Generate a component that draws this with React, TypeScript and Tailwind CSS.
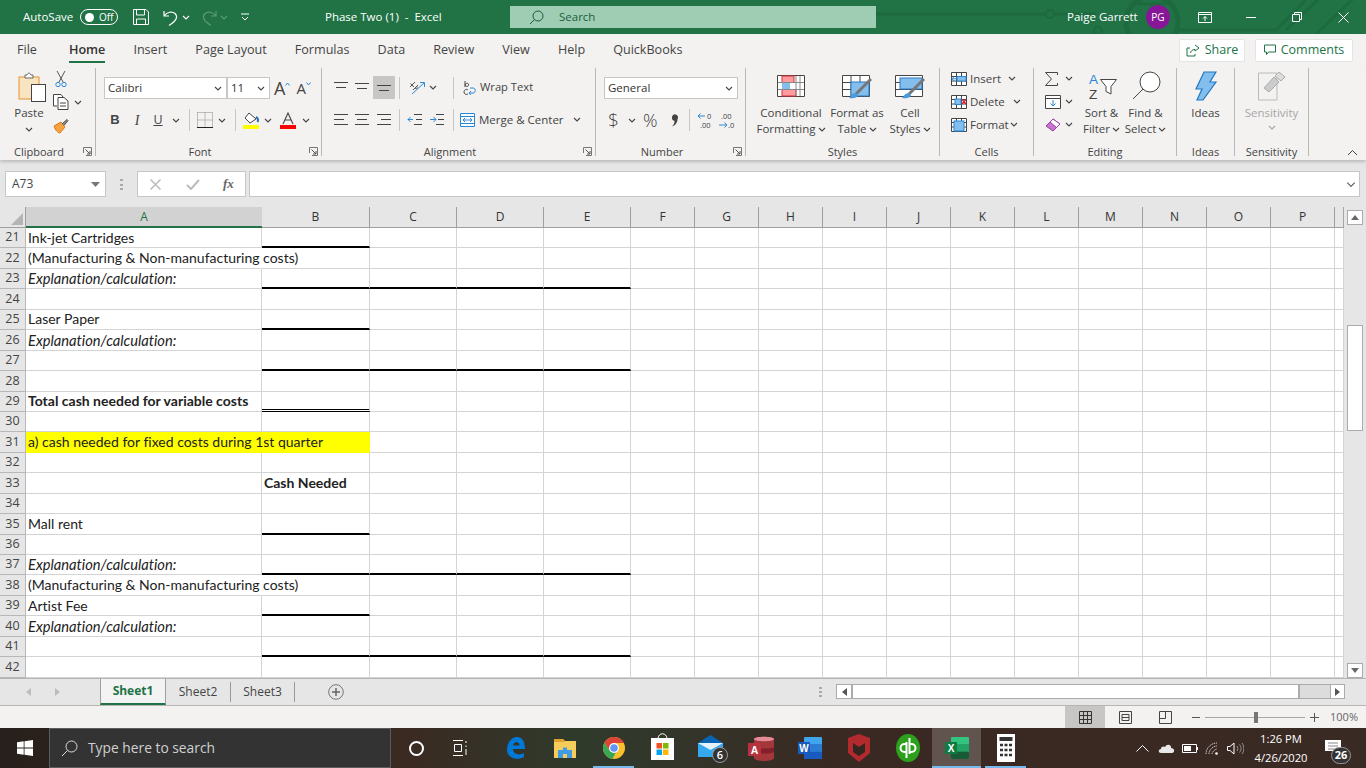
import type { ReactNode } from "react"

const Chev = ({ className = "", color = "#444" }: { className?: string; color?: string }) => (
  <svg width="8" height="5" viewBox="0 0 8 5" className={`shrink-0 ${className}`}>
    <path d="M1 1l3 3 3-3" fill="none" stroke={color} strokeWidth="1.1" />
  </svg>
)

function Launcher() {
  return (
    <svg width="9" height="9" viewBox="0 0 9 9" className="absolute bottom-0 right-[3px]">
      <path d="M.5 6V.5H8.500V8.500H3" fill="none" stroke="#777" />
      <path d="M2.500 2.500L7 7M7 4v3H4" fill="none" stroke="#555" />
    </svg>
  )
}

function Group({ label, className, launcher, children }: { label: string; className: string; launcher?: boolean; children: ReactNode }) {
  return (
    <div className={`relative flex h-[88px] shrink-0 flex-col border-r border-[#b8b8b8] ${className}`}>
      <div className="min-h-0 flex-1">{children}</div>
      <div className={`mb-[-4px] h-[17px] text-center text-[11px] leading-[17px] text-[#444] ${launcher ? "pr-[17px]" : ""}`}>{label}</div>
      {launcher && <Launcher />}
    </div>
  )
}

const Divider = ({ className = "" }: { className?: string }) => <div className={`h-[22px] w-px shrink-0 bg-[#c8c6c4] ${className}`} />

function Lines({ rows }: { rows: [number, number][] }) {
  return (
    <svg width="16" height="14" viewBox="0 0 16 14">
      {rows.map(([a, b], i) => (
        <path key={i} d={`M${a} ${1.5 + i * 5}H${b}`} stroke="#444" strokeWidth="1" />
      ))}
    </svg>
  )
}

function TitleBar() {
  return (
    <div className="relative flex h-[34px] shrink-0 items-center overflow-hidden bg-[#217346] text-[11.5px] text-white">
      <svg width="490" height="34" viewBox="0 0 490 34" className="absolute right-0 top-0">
        <g fill="none" stroke="#1c6a3e" strokeWidth="3">
          <path d="M0 14H170M178 14H220" />
          <circle cx="174" cy="14" r="4" strokeWidth="2" />
          <circle cx="276" cy="22" r="26" strokeWidth="5" />
          <path d="M262 4H290M300 30H400L430 0M410 30L450 -8M440 34L480 -4" />
          <circle cx="222" cy="31" r="4" strokeWidth="2" />
        </g>
      </svg>
      <span className="relative ml-[23px] w-[50px]">AutoSave</span>
      <div className="relative ml-[7px] flex h-[16px] w-[38px] items-center rounded-full border border-white pl-[4px] text-[10px]">
        <span className="h-[9px] w-[9px] rounded-full bg-white" />
        <span className="ml-[5px]">Off</span>
      </div>
      <svg width="16" height="16" viewBox="0 0 16 16" className="relative ml-[15px]">
        <path d="M.5.5H13L15.500 3V15.500H.5Z M3.500.5V6H11.500V.5 M3.500 15.500V10H12.500V15.500" fill="none" stroke="#fff" />
      </svg>
      <svg width="16" height="17" viewBox="0 0 16 17" className="relative ml-[14px]">
        <path d="M1 2V7H6 M1.500 6.500C4 3 9 2 12 4.500C15.500 8 13 12 6 16.500" fill="none" stroke="#fff" strokeWidth="1.200" />
      </svg>
      <Chev color="#fff" className="relative ml-[3px]" />
      <svg width="16" height="17" viewBox="0 0 16 17" className="relative ml-[11px]">
        <path d="M15 2V7H10 M14.500 6.500C12 3 7 2 4 4.500C.5 8 3 12 10 16.500" fill="none" stroke="#5d9a79" strokeWidth="1.200" />
      </svg>
      <Chev color="#5d9a79" className="relative ml-[3px]" />
      <svg width="8" height="8" viewBox="0 0 8 8" className="relative ml-[13px]">
        <path d="M0 1H8M1 4l3 3 3-3" fill="none" stroke="#fff" />
      </svg>
      <span className="relative ml-[76px] w-[116px] whitespace-pre">Phase Two (1)  -  Excel</span>
      <div className="relative ml-[69px] flex h-[22px] w-[366px] items-center bg-[#9fcdb3] text-[#1c5e3c]">
        <svg width="15" height="15" viewBox="0 0 15 15" className="ml-[19px]">
          <circle cx="9" cy="6" r="5" fill="none" stroke="#1c5e3c" />
          <path d="M5.500 9.500L1 14" stroke="#1c5e3c" />
        </svg>
        <span className="ml-[15px]">Search</span>
      </div>
      <span className="relative ml-[191px] w-[68px] whitespace-nowrap">Paige Garrett</span>
      <div className="relative ml-[11px] flex h-[24px] w-[24px] items-center justify-center rounded-full bg-[#881798] text-[10px]">PG</div>
      <svg width="14" height="11" viewBox="0 0 14 11" className="relative ml-[28px]">
        <path d="M.5.5H13.500V10.500H.5ZM.5 2.500H13.500M7 9V4.500M5 6.500L7 4.500 9 6.500" fill="none" stroke="#fff" />
      </svg>
      <div className="relative ml-[34px] h-px w-[10px] bg-white" />
      <svg width="10" height="10" viewBox="0 0 10 10" className="relative ml-[36px]">
        <path d="M.5 2.500H7.500V9.500H.5ZM2.500 2.500V.5H9.500V7.500H7.500" fill="none" stroke="#fff" />
      </svg>
      <svg width="11" height="11" viewBox="0 0 11 11" className="relative ml-[36px]">
        <path d="M.5.5L10.500 10.500M10.500.5L.5 10.500" stroke="#fff" />
      </svg>
    </div>
  )
}

function TabRow() {
  const tabs = ["Insert", "Page Layout", "Formulas", "Data", "Review", "View", "Help", "QuickBooks"]
  return (
    <div className="flex h-[34px] shrink-0 items-center bg-[#f3f2f1] pb-[2px] text-[12.6px] text-[#444]">
      <span className="ml-[17px]">File</span>
      <div className="ml-[32px] flex h-full flex-col items-center justify-center">
        <span className="relative top-[2px] border-b-[2px] border-[#217346] pb-[1px] font-semibold text-[#333]">Home</span>
      </div>
      <div className="ml-[28px] flex gap-[28px]">
        {tabs.map((t) => (
          <span key={t}>{t}</span>
        ))}
      </div>
      <div className="ml-auto mr-[13px] flex gap-[10px] text-[12.5px] font-medium text-[#217346]">
        <div className="flex h-[23px] w-[66px] items-center justify-center gap-[5px] rounded-[2px] border border-[#e4e4e4] bg-white">
          <svg width="14" height="13" viewBox="0 0 14 13">
            <path d="M9 1l4 3-4 3V5.500C6 5.500 5 7 4.500 9 M9 10V12H1V4H4" fill="none" stroke="#217346" />
          </svg>
          Share
        </div>
        <div className="flex h-[23px] w-[98px] items-center justify-center gap-[5px] rounded-[2px] border border-[#e4e4e4] bg-white">
          <svg width="12" height="12" viewBox="0 0 12 12">
            <path d="M.5 1H11.500V8H4.500L2.500 10.500V8H.5Z" fill="none" stroke="#217346" />
          </svg>
          Comments
        </div>
      </div>
    </div>
  )
}

function ClipboardGroup() {
  return (
    <Group label="Clipboard" className="w-[96px]" launcher>
      <div className="flex h-full">
        <div className="flex w-[58px] flex-col items-center pt-[4px]">
          <svg width="28" height="30" viewBox="0 0 28 30" className="ml-[5px]">
            <rect x="1" y="5" width="20" height="22" fill="#f8e4c0" stroke="#e8922c" />
            <path d="M7 6V3H9C10 .5 12 .5 13 3H15V6Z" fill="#fff" stroke="#666" />
            <rect x="13.500" y="12.500" width="14" height="17" fill="#fff" stroke="#444" />
          </svg>
          <span className="mt-[3px] text-[11.5px] leading-[15px] text-[#444]">Paste</span>
          <Chev className="mt-[7px]" />
        </div>
        <div className="flex flex-col pt-[3px]">
          <svg width="12" height="17" viewBox="0 0 12 17" className="ml-[-3px]">
            <path d="M2 0L8 11M10 0L4 11" stroke="#555" fill="none" />
            <circle cx="3" cy="13.500" r="2.200" fill="none" stroke="#2b88d8" />
            <circle cx="9" cy="13.500" r="2.200" fill="none" stroke="#2b88d8" />
          </svg>
          <div className="ml-[-5px] mt-[6px] flex items-center gap-[5px]">
            <svg width="16" height="16" viewBox="0 0 16 16">
              <path d="M4 12H.5V.5H8L10 3M5 3.500H11L15 7V15.500H5Z M7 9H13M7 12H13" fill="#fff" stroke="#444" />
            </svg>
            <Chev />
          </div>
          <svg width="16" height="16" viewBox="0 0 16 16" className="ml-[-5px] mt-[8px]">
            <path d="M1 8L8 4 12 9 7 15C5 15 2 12 1 8Z" fill="#f6a33c" stroke="#d9792a" />
            <path d="M9 6L14 1.500 15 2.500 11 7.500" fill="#888" stroke="#555" />
          </svg>
        </div>
      </div>
    </Group>
  )
}

function Select({ className, text }: { className: string; text: string }) {
  return (
    <div className={`flex h-[22px] items-center justify-between border border-[#c6c6c6] bg-white pl-[3px] pr-[4px] text-[11.5px] text-[#333] ${className}`}>
      {text}
      <Chev />
    </div>
  )
}

function FontGroup() {
  return (
    <Group label="Font" className="w-[226px]" launcher>
      <div className="flex flex-col pl-[8px] pt-[9px]">
        <div className="flex items-center">
          <Select className="w-[123px]" text="Calibri" />
          <Select className="w-[43px]" text="11" />
          <span className="ml-[4px] text-[18px] leading-none text-[#444]">A</span>
          <svg width="5" height="4" viewBox="0 0 5 4" className="mb-[9px]"><path d="M.5 3.500L2.500 1 4.500 3.500" fill="none" stroke="#2b88d8" /></svg>
          <span className="ml-[6px] text-[15px] leading-none text-[#444]">A</span>
          <svg width="5" height="4" viewBox="0 0 5 4" className="mb-[9px]"><path d="M.5.5L2.500 3 4.500.5" fill="none" stroke="#2b88d8" /></svg>
        </div>
        <div className="mt-[10px] flex h-[22px] items-center text-[#444]">
          <span className="w-[22px] text-center font-['Liberation_Sans',sans-serif] text-[13px] font-bold">B</span>
          <span className="w-[22px] text-center font-['Liberation_Serif',serif] text-[14px] italic">I</span>
          <span className="w-[20px] text-center text-[12.5px] leading-[14px] underline">U</span>
          <Chev className="ml-[4px]" />
          <Divider className="ml-[9px]" />
          <svg width="16" height="16" viewBox="0 0 16 16" className="ml-[7px]">
            <path d="M.5.5H15.500V15M.5.500V15M8 .5V15M.5 8H15.500" fill="none" stroke="#888" strokeDasharray="1 1" />
            <path d="M0 15.500H16" stroke="#222" />
          </svg>
          <Chev className="ml-[5px]" />
          <Divider className="ml-[9px]" />
          <svg width="16" height="17" viewBox="0 0 16 17" className="ml-[7px]">
            <path d="M6 1L13 7 7 11 2 6Z" fill="#fff" stroke="#444" />
            <path d="M13 5C15 6 15.500 8 14.500 10" stroke="#2b6cb0" strokeWidth="2" fill="none" />
            <rect x="0" y="13" width="16" height="4" fill="#ffff00" />
          </svg>
          <Chev className="ml-[5px]" />
          <svg width="16" height="17" viewBox="0 0 16 17" className="ml-[8px]">
            <path d="M3 12L8 1 13 12M5 8H11" fill="none" stroke="#444" strokeWidth="1.100" />
            <rect x="0" y="13" width="16" height="4" fill="#ff0000" />
          </svg>
          <Chev className="ml-[6px]" />
        </div>
      </div>
    </Group>
  )
}

function AlignmentGroup() {
  return (
    <Group label="Alignment" className="w-[274px]" launcher>
      <div className="flex flex-col pl-[8px] pt-[8px] text-[11.5px] text-[#444]">
        <div className="flex h-[23px] items-center">
          <div className="flex w-[21px] justify-center"><Lines rows={[[1, 15], [3, 13]]} /></div>
          <div className="flex w-[22px] justify-center"><div className="mt-[3px]"><Lines rows={[[1, 15], [3, 13]]} /></div></div>
          <div className="flex h-[23px] w-[22px] items-end justify-center bg-[#c8c6c4] pb-[1px]"><Lines rows={[[1, 15], [3, 13]]} /></div>
          <Divider className="ml-[4px]" />
          <svg width="16" height="15" viewBox="0 0 16 15" className="ml-[9px]">
            <path d="M1 7L6 2M1.500 3.500L5 7M4 10L9 5M6 8C7 9.500 9 8 8 6.500" fill="none" stroke="#555" />
            <path d="M3 14L15 3M11 2.500H15.500V7" stroke="#2b88d8" fill="none" />
          </svg>
          <Chev className="ml-[4px]" />
          <Divider className="ml-[16px]" />
          <svg width="14" height="16" viewBox="0 0 14 16" className="ml-[9px]">
            <path d="M2 1V7M2 5C3 2.500 6 3 5.500 5C5 7 3 7 2 5" fill="none" stroke="#444" />
            <path d="M5 10C3 8.500 1 10 1 12C1 14 3 15 5 14" fill="none" stroke="#444" />
            <path d="M6 13H10C13 13 13 8 10 8H7M8 11L6 13 8 15" fill="none" stroke="#2b88d8" />
          </svg>
          <span className="ml-[3px] text-[11.2px]">Wrap Text</span>
        </div>
        <div className="mt-[9px] flex h-[23px] items-center">
          <div className="flex w-[21px] justify-center"><Lines rows={[[1, 15], [1, 11], [1, 15]]} /></div>
          <div className="flex w-[22px] justify-center"><Lines rows={[[1, 15], [3, 13], [1, 15]]} /></div>
          <div className="flex w-[22px] justify-center"><Lines rows={[[1, 15], [5, 15], [1, 15]]} /></div>
          <Divider className="ml-[4px]" />
          <svg width="16" height="14" viewBox="0 0 16 14" className="ml-[7px]">
            <path d="M7 1.500H15M9 6.500H15M7 11.500H15" stroke="#444" />
            <path d="M6 6.500H1M3.500 4L1 6.500 3.500 9" stroke="#2b88d8" fill="none" />
          </svg>
          <svg width="16" height="14" viewBox="0 0 16 14" className="ml-[6px]">
            <path d="M7 1.500H15M9 6.500H15M7 11.500H15" stroke="#444" />
            <path d="M1 6.500H7M4.500 4L7 6.500 4.500 9" stroke="#2b88d8" fill="none" />
          </svg>
          <Divider className="ml-[8px]" />
          <svg width="15" height="14" viewBox="0 0 15 14" className="ml-[6px]">
            <path d="M.5.5H14.500V13.500H.5ZM.5 3.500H14.500M.5 10.500H14.500" fill="#fff" stroke="#2b88d8" />
            <path d="M3 7H12M5 5L3 7 5 9M10 5L12 7 10 9" fill="none" stroke="#2b88d8" />
          </svg>
          <span className="ml-[4px]">Merge &amp; Center</span>
          <Chev className="ml-[9px]" />
        </div>
      </div>
    </Group>
  )
}

function NumberGroup() {
  return (
    <Group label="Number" className="w-[150px]" launcher>
      <div className="flex flex-col pl-[8px] pt-[9px] text-[#444]">
        <Select className="w-[134px]" text="General" />
        <div className="mt-[10px] flex h-[22px] items-center">
          <span className="ml-[4px] w-[12px] text-[19px] font-light leading-none">$</span>
          <Chev className="ml-[8px]" />
          <span className="ml-[7px] w-[18px] text-[18px] font-light leading-none">%</span>
          <svg width="8" height="13" viewBox="0 0 8 13" className="ml-[10px]">
            <path d="M1 3.500A3 3 0 1 1 6.500 5C6.500 9 4 11.500 1 12.500C3 10.500 3.500 9 3.500 7A3 3 0 0 1 1 3.500Z" fill="#444" />
          </svg>
          <Divider className="ml-[10px]" />
          <svg width="18" height="18" viewBox="0 0 18 18" className="ml-[7px]">
            <text x="10" y="8" fontSize="7.500" fill="#444">0</text>
            <text x="3" y="17" fontSize="7.500" fill="#444">.00</text>
            <path d="M8 5H1M3.500 2.500L1 5 3.500 7.500" fill="none" stroke="#2b88d8" />
          </svg>
          <svg width="18" height="18" viewBox="0 0 18 18" className="ml-[3px]">
            <text x="3" y="8" fontSize="7.500" fill="#444">.00</text>
            <text x="10" y="17" fontSize="7.500" fill="#444">.0</text>
            <path d="M1 14H9M6.500 11.500L9 14 6.500 16.500" fill="none" stroke="#2b88d8" />
          </svg>
        </div>
      </div>
    </Group>
  )
}

function LargeLabel({ a, b, muted, className = "mt-[4px]" }: { a: string; b: string; muted?: boolean; className?: string }) {
  return (
    <div className={`flex flex-col items-center text-[11.5px] leading-[16px] ${muted ? "text-[#a6a6a6]" : "text-[#444]"} ${className}`}>
      <span className="whitespace-nowrap">{a}</span>
      <span className="flex items-center gap-[2px] whitespace-nowrap">{b}<Chev color={muted ? "#a6a6a6" : "#444"} /></span>
    </div>
  )
}

function StylesGroup() {
  return (
    <Group label="Styles" className="w-[194px]">
      <div className="flex pl-[2px] pt-[7px]">
        <div className="flex w-[86px] flex-col items-center">
          <svg width="28" height="22" viewBox="0 0 28 22">
            <path d="M.5.5H27.500V21.500H.5Z" fill="#fff" stroke="#444" />
            <rect x="5" y="1" width="12" height="6.500" fill="#ff9a9f" stroke="#d13438" />
            <rect x="5" y="8" width="8" height="6" fill="#83beec" />
            <rect x="5" y="14.500" width="14" height="6.500" fill="#ff9a9f" stroke="#d13438" />
            <path d="M19 1V21M23 1V21M1 7.500H27M1 14.500H27" stroke="#888" />
          </svg>
          <LargeLabel a="Conditional" b="Formatting" className="mt-[8px]" />
        </div>
        <div className="flex w-[46px] flex-col items-center">
          <svg width="30" height="24" viewBox="0 0 30 24" className="mb-[-2px]">
            <path d="M.5.5H27.500V21.500H.5ZM.5 7.500H27.500M.5 14.500H27.500M9 .5V21.500M18 .5V21.500" fill="#fff" stroke="#444" />
            <rect x="9" y="7" width="18" height="14" fill="#83beec" stroke="#2b78c4" />
            <path d="M29 4L14 19" stroke="#777" strokeWidth="3" />
            <path d="M14 18C10 18 9 21 7 23C12 24 16 22 16 20Z" fill="#4a9ae0" />
          </svg>
          <LargeLabel a="Format as" b="Table" className="mt-[8px]" />
        </div>
        <div className="ml-[7px] flex w-[46px] flex-col items-center">
          <svg width="30" height="24" viewBox="0 0 30 24" className="mb-[-2px]">
            <path d="M.5.5H27.500V21.500H.5ZM.5 7.500H27.500M.5 14.500H27.500" fill="#fff" stroke="#444" />
            <rect x="5" y="3" width="22" height="11" fill="#83beec" stroke="#2b78c4" />
            <path d="M29 4L14 19" stroke="#777" strokeWidth="3" />
            <path d="M14 18C10 18 9 21 7 23C12 24 16 22 16 20Z" fill="#4a9ae0" />
          </svg>
          <LargeLabel a="Cell" b="Styles" className="mt-[8px]" />
        </div>
      </div>
    </Group>
  )
}

function CellIcon({ kind }: { kind: "insert" | "delete" | "format" }) {
  return (
    <svg width="16" height="14" viewBox="0 0 16 14" className="shrink-0">
      <path d="M.5.5H15.500V13.500H.5ZM.5 4.500H15.500M.5 9H15.500M5.500.5V13.500M10.500.5V13.500" fill="#fff" stroke="#444" />
      {kind === "insert" && <path d="M6 4.500H15V9H6Z" fill="#83beec" stroke="#2b88d8" />}
      {kind === "insert" && <path d="M6 6.800H1M3 4.800L1 6.800 3 8.800" fill="none" stroke="#2b88d8" />}
      {kind === "delete" && <rect x="4" y="4" width="6" height="5.500" fill="#83beec" stroke="#2b88d8" />}
      {kind === "delete" && <path d="M11 4.500L15 9M15 4.500L11 9" stroke="#e81123" strokeWidth="1.200" />}
      {kind === "format" && <rect x="3" y="3" width="10" height="10" fill="#83beec" stroke="#2b88d8" />}
    </svg>
  )
}

function CellsGroup() {
  return (
    <Group label="Cells" className="w-[94px]">
      <div className="mt-[-1px] flex flex-col pl-[11px] text-[11.5px] text-[#444]">
        <div className="flex h-[23px] items-center"><CellIcon kind="insert" /><span className="ml-[3px]">Insert</span><Chev className="ml-[7px]" /></div>
        <div className="flex h-[23px] items-center"><CellIcon kind="delete" /><span className="ml-[3px]">Delete</span><Chev className="ml-[8px]" /></div>
        <div className="flex h-[23px] items-center"><CellIcon kind="format" /><span className="ml-[3px]">Format</span><Chev className="ml-[1px]" /></div>
      </div>
    </Group>
  )
}

function EditingGroup() {
  return (
    <Group label="Editing" className="w-[143px]">
      <div className="flex">
        <div className="mt-[-1px] flex w-[44px] flex-col pl-[11px]">
          <div className="flex h-[23px] items-center gap-[6px]">
            <svg width="13" height="14" viewBox="0 0 13 14"><path d="M12.500 3V.5H.5L6.500 7 .5 13.500H12.500V11" fill="none" stroke="#444" /></svg>
            <Chev className="ml-[1px]" />
          </div>
          <div className="flex h-[23px] items-center gap-[4px]">
            <svg width="16" height="14" viewBox="0 0 16 14"><path d="M.5.5H15.500V13.500H.5ZM.5 3.500H15.500" fill="#fff" stroke="#444" /><path d="M8 5V11M5.500 8.500L8 11 10.500 8.500" fill="none" stroke="#2b88d8" /></svg>
            <Chev />
          </div>
          <div className="flex h-[23px] items-center gap-[4px]">
            <svg width="16" height="14" viewBox="0 0 16 14"><path d="M1 8L8 1 15 6 8 13Z" fill="#c774d1" stroke="#9a3fa8" /><path d="M8 1L15 6 11.500 9.500 5 4Z" fill="#fff" stroke="#9a3fa8" /></svg>
            <Chev />
          </div>
        </div>
        <div className="flex w-[47px] flex-col items-center pt-[3px]">
          <svg width="30" height="31" viewBox="0 0 30 31" className="mb-[-1px]">
            <text x="2" y="12.500" fontSize="13.500" fontFamily="Liberation Sans" fill="#2b88d8">A</text>
            <text x="2" y="28" fontSize="13.500" fontFamily="Liberation Sans" fill="#444">Z</text>
            <path d="M13.500 8.500H29.500L24 15.500V23L19 20.500V15.500Z" fill="#fff" stroke="#444" />
          </svg>
          <LargeLabel a="Sort &" b="Filter" className="mt-[4px]" />
        </div>
        <div className="ml-[-3px] flex w-[47px] flex-col items-center pt-[3px]">
          <svg width="30" height="30" viewBox="0 0 30 30">
            <circle cx="19" cy="11" r="10" fill="#fff" stroke="#444" />
            <path d="M12 18L2 28" stroke="#444" />
          </svg>
          <LargeLabel a="Find &" b="Select" className="mt-[4px]" />
        </div>
      </div>
    </Group>
  )
}

function IdeasGroup() {
  return (
    <Group label="Ideas" className="w-[58px]">
      <div className="flex flex-col items-center pt-[3px]">
        <svg width="22" height="30" viewBox="0 0 22 30">
          <path d="M9 1H21L15 11H21L8 29H2L7 18H1Z" fill="#83beec" stroke="#1f78c4" strokeWidth="1.200" />
        </svg>
        <span className="mt-[4px] text-[11.5px] leading-[16px] text-[#444]">Ideas</span>
      </div>
    </Group>
  )
}

function SensitivityGroup() {
  return (
    <Group label="Sensitivity" className="w-[74px]">
      <div className="flex flex-col items-center pt-[3px]">
        <svg width="28" height="30" viewBox="0 0 28 30">
          <path d="M.5 2H19V29H.5Z" fill="#f3f2f1" stroke="#bbb" />
          <path d="M6 17L16 6 21 11 11 21Z" fill="#ccc" stroke="#aaa" />
          <path d="M17 5L21 1 27 6 23 10Z" fill="#ddd" stroke="#aaa" />
        </svg>
        <span className="mt-[4px] text-[11.5px] leading-[16px] text-[#a6a6a6]">Sensitivity</span>
        <Chev color="#a6a6a6" className="mt-[4px]" />
      </div>
    </Group>
  )
}

function Ribbon() {
  return (
    <div className="relative flex h-[92px] shrink-0 bg-[#f3f2f1] shadow-[0_2px_3px_rgba(0,0,0,0.18)]">
      <ClipboardGroup />
      <FontGroup />
      <AlignmentGroup />
      <NumberGroup />
      <StylesGroup />
      <CellsGroup />
      <EditingGroup />
      <IdeasGroup />
      <SensitivityGroup />
      <svg width="11" height="7" viewBox="0 0 11 7" className="absolute bottom-[4px] right-[8px]">
        <path d="M1 6l4.500-4.500L10 6" fill="none" stroke="#444" />
      </svg>
    </div>
  )
}

function FormulaBar() {
  return (
    <div className="flex h-[47px] shrink-0 items-start bg-[#e6e6e6] pt-[11px]">
      <div className="ml-[5px] flex h-[26px] w-[101px] items-center justify-between border border-[#c6c6c6] bg-white pl-[6px] pr-[5px] text-[12px] text-[#444]">
        A73
        <svg width="9" height="5" viewBox="0 0 9 5"><path d="M0 0H9L4.500 5Z" fill="#777" /></svg>
      </div>
      <div className="ml-[14px] mt-[8px] flex h-[11px] w-[3px] flex-col justify-between">
        <span className="h-[2px] bg-[#aaa]" /><span className="h-[2px] bg-[#aaa]" /><span className="h-[2px] bg-[#aaa]" />
      </div>
      <div className="ml-[14px] flex h-[26px] w-[109px] items-center border border-[#c6c6c6] bg-white">
        <svg width="11" height="11" viewBox="0 0 11 11" className="ml-[12px]"><path d="M.5.5L10.500 10.500M10.500.5L.5 10.500" stroke="#bbb" strokeWidth="1.500" /></svg>
        <svg width="14" height="11" viewBox="0 0 14 11" className="ml-[25px]"><path d="M1 6L5 10 13 1" fill="none" stroke="#bbb" strokeWidth="2" /></svg>
        <span className="ml-[23px] font-['Liberation_Serif',serif] text-[13px] font-bold italic text-[#666]">fx</span>
      </div>
      <div className="ml-[3px] flex h-[26px] w-[1111px] items-center justify-end border border-[#c6c6c6] bg-white pr-[4px]">
        <Chev color="#666" className="scale-125" />
      </div>
    </div>
  )
}

type Row = {
  n: number
  a?: string
  b?: string
  kind?: "italic" | "bold" | "wide" | "yellow"
  line?: "b" | "span" | "double"
}

const rows: Row[] = [
  { n: 21, a: "Ink-jet Cartridges", line: "b" },
  { n: 22, a: "(Manufacturing & Non-manufacturing costs)", kind: "wide" },
  { n: 23, a: "Explanation/calculation:", kind: "italic", line: "span" },
  { n: 24 },
  { n: 25, a: "Laser Paper", line: "b" },
  { n: 26, a: "Explanation/calculation:", kind: "italic" },
  { n: 27, line: "span" },
  { n: 28 },
  { n: 29, a: "Total cash needed for variable costs", kind: "bold", line: "double" },
  { n: 30 },
  { n: 31, a: "a) cash needed for fixed costs during 1st quarter", kind: "yellow" },
  { n: 32 },
  { n: 33, b: "Cash Needed" },
  { n: 34 },
  { n: 35, a: "Mall rent", line: "b" },
  { n: 36 },
  { n: 37, a: "Explanation/calculation:", kind: "italic", line: "span" },
  { n: 38, a: "(Manufacturing & Non-manufacturing costs)", kind: "wide" },
  { n: 39, a: "Artist Fee", line: "b" },
  { n: 40, a: "Explanation/calculation:", kind: "italic" },
  { n: 41, line: "span" },
  { n: 42 },
]

const columns = ["A", "B", "C", "D", "E", "F", "G", "H", "I", "J", "K", "L", "M", "N", "O", "P", ""]

function cellClass(row: Row, col: number) {
  const thick =
    (row.line === "b" && col === 1) || (row.line === "span" && col >= 1 && col <= 4)
  const double = row.line === "double" && col === 1
  const yellow = row.kind === "yellow" && col <= 1
  const noRight = (row.kind === "wide" || row.kind === "yellow") && col === 0
  let cls = "relative flex min-w-0 items-center whitespace-nowrap border-b border-r border-[#d4d4d4] pl-[2px] "
  if (thick) cls += "border-b-2 border-b-black "
  if (double) cls += "border-b-[3px] border-b-black [border-bottom-style:double] "
  if (yellow) cls += "border-b-[#ffff00] border-r-[#ffff00] "
  if (noRight) cls += "border-r-transparent "
  cls += yellow ? "bg-[#ffff00]" : "bg-white"
  return cls
}

function Sheet() {
  return (
    <div className="flex h-[471px] shrink-0 bg-[#e6e6e6]">
      <div className="grid h-full w-[1344px] shrink-0 grid-cols-[26px_236px_108px_87px_87px_87px_repeat(11,64px)_9px] grid-rows-[21px_repeat(22,20.45px)] border-r border-[#a6a6a6] font-['Lato',sans-serif] text-[14px] leading-none text-[#222] [font-variant-ligatures:none]">
        <div className="flex items-end justify-end border-b border-r border-[#9f9f9f] p-[2px]">
          <svg width="12" height="12" viewBox="0 0 12 12"><path d="M12 0V12H0Z" fill="#b4b4b4" /></svg>
        </div>
        {columns.map((c, i) => (
          <div
            key={c || "q"}
            className={`flex items-center justify-center text-[12px] font-['Open_Sans',sans-serif] ${
              i === 0
                ? "border-b-2 border-b-[#217346] bg-[#d2d2d2] text-[#217346]"
                : i === 16
                  ? "border-b border-[#9f9f9f]"
                  : "border-b border-r border-[#9f9f9f] text-[#333]"
            }`}
          >
            {c}
          </div>
        ))}
        {rows.map((row) => (
          <div key={row.n} className="contents">
            <div className="flex items-center justify-center border-b border-r border-[#b8b8b8] font-['Open_Sans',sans-serif] text-[12.5px] text-[#444]">
              {row.n}
            </div>
            {columns.map((_, col) => (
              <div key={col} className={cellClass(row, col)}>
                {col === 0 && row.a && (
                  <span className={`relative z-10 ${row.kind === "italic" ? "text-[14.7px] italic" : ""} ${row.kind === "bold" ? "font-bold" : ""}`}>{row.a}</span>
                )}
                {col === 1 && row.b && <span className="font-bold">{row.b}</span>}
              </div>
            ))}
          </div>
        ))}
      </div>
      <div className="ml-[3px] flex w-[16px] flex-col pt-[3px]">
        <div className="flex h-[15px] items-center justify-center border border-[#ababab] bg-white">
          <svg width="8" height="5" viewBox="0 0 8 5"><path d="M4 0L8 5H0Z" fill="#666" /></svg>
        </div>
        <div className="mt-[100px] h-[106px] border border-[#ababab] bg-white" />
        <div className="mt-auto flex h-[15px] items-center justify-center border border-[#ababab] bg-white">
          <svg width="8" height="5" viewBox="0 0 8 5"><path d="M0 0H8L4 5Z" fill="#666" /></svg>
        </div>
      </div>
    </div>
  )
}

function SheetTabs() {
  return (
    <div className="flex h-[28px] shrink-0 items-stretch border-y border-[#b5b5b5] bg-[#e6e6e6] text-[12px] text-[#444]">
      <div className="flex w-[100px] items-center pl-[26px]">
        <svg width="6" height="8" viewBox="0 0 6 8"><path d="M5 0V8L0 4Z" fill="#bcbcbc" /></svg>
        <svg width="6" height="8" viewBox="0 0 6 8" className="ml-[23px]"><path d="M0 0V8L5 4Z" fill="#bcbcbc" /></svg>
      </div>
      <div className="mt-[-1px] flex w-[66px] items-center justify-center border-x border-b-2 border-t border-x-[#a0a0a0] border-b-[#217346] border-t-[#b5b5b5] bg-[#f3f3f3] font-bold text-[#217346]">Sheet1</div>
      <div className="flex w-[64px] items-center justify-center">
        <span>Sheet2</span>
      </div>
      <div className="my-[3px] w-px bg-[#999]" />
      <div className="flex w-[63px] items-center justify-center">Sheet3</div>
      <div className="my-[3px] w-px bg-[#999]" />
      <div className="ml-[33px] flex items-center">
        <svg width="16" height="16" viewBox="0 0 16 16">
          <circle cx="8" cy="8" r="7.300" fill="none" stroke="#777" />
          <path d="M4 8H12M8 4V12" stroke="#666" strokeWidth="1.500" />
        </svg>
      </div>
      <div className="ml-[475px] flex w-[3px] flex-col justify-center gap-[2px]">
        <span className="h-[2px] bg-[#aaa]" /><span className="h-[2px] bg-[#aaa]" /><span className="h-[2px] bg-[#aaa]" />
      </div>
      <div className="ml-[14px] mt-[5px] flex h-[15px] w-[509px] border border-[#ababab]">
        <div className="flex w-[14px] items-center justify-center bg-white">
          <svg width="5" height="8" viewBox="0 0 5 8"><path d="M5 0V8L0 4Z" fill="#555" /></svg>
        </div>
        <div className="w-[449px] border-x-[2px] border-[#ababab] bg-white" />
        <div className="flex-1 bg-[#dcdcdc]" />
        <div className="flex w-[14px] items-center justify-center border-l border-[#ababab] bg-white">
          <svg width="5" height="8" viewBox="0 0 5 8"><path d="M0 0V8L5 4Z" fill="#555" /></svg>
        </div>
      </div>
    </div>
  )
}

function StatusBar() {
  return (
    <div className="flex h-[22px] shrink-0 items-stretch justify-end bg-[#f3f2f1] text-[11px] text-[#666]">
      <div className="flex w-[40px] items-center justify-center bg-[#c8c6c4]">
        <svg width="13" height="13" viewBox="0 0 13 13"><path d="M.5.5H12.500V12.500H.5ZM4.500.5V12.500M8.500.5V12.500M.5 4.500H12.500M.5 8.500H12.500" fill="none" stroke="#333" /></svg>
      </div>
      <div className="flex w-[40px] items-center justify-center">
        <svg width="13" height="13" viewBox="0 0 13 13"><path d="M.5.5H12.500V12.500H.5ZM3 3.500H10M3 6.500H10M3 9.500H10M3 3.500V9.500M10 3.500V9.500" fill="none" stroke="#444" /></svg>
      </div>
      <div className="flex w-[40px] items-center justify-center">
        <svg width="13" height="13" viewBox="0 0 13 13"><path d="M.5.5H12.500V12.500H.5ZM.5 7.500H6.500V.5M6.500 7.500" fill="none" stroke="#444" /></svg>
      </div>
      <div className="ml-[7px] flex items-center">
        <div className="h-px w-[8px] bg-[#555]" />
        <div className="relative ml-[5px] flex h-[12px] w-[100px] items-center">
          <div className="h-px w-full bg-[#a6a6a6]" />
          <div className="absolute left-[49px] h-[11px] w-[4px] bg-[#767676]" />
        </div>
        <svg width="9" height="9" viewBox="0 0 9 9" className="ml-[5px]"><path d="M0 4.500H9M4.500 0V9" stroke="#555" /></svg>
      </div>
      <span className="ml-[11px] mr-[8px] self-center text-[#666]">100%</span>
    </div>
  )
}

function TaskIcon({ active, underline, children }: { active?: boolean; underline?: boolean; children: ReactNode }) {
  return (
    <div className={`relative flex h-full w-[49px] shrink-0 items-center justify-center ${active ? "bg-white/20" : ""}`}>
      {children}
      {underline && <div className={`absolute bottom-0 h-[2px] bg-[#76b9ed] ${active ? "inset-x-0" : "inset-x-[4px]"}`} />}
    </div>
  )
}

function OfficeIcon({ letter, box, bands }: { letter: string; box: string; bands: string[] }) {
  return (
    <svg width="24" height="24" viewBox="0 0 24 24">
      <rect x="6" y="1" width="18" height="22" rx="1" fill={bands[0]} />
      <rect x="6" y="8" width="18" height="7.500" fill={bands[1]} />
      <rect x="6" y="15.500" width="18" height="7.500" rx="1" fill={bands[2]} />
      <rect x="0" y="6" width="12" height="12" fill={box} />
      <text x="6" y="15.500" textAnchor="middle" fontSize="10" fontWeight="700" fontFamily="Liberation Sans" fill="#fff">{letter}</text>
    </svg>
  )
}

function Taskbar() {
  return (
    <div className="flex h-[40px] shrink-0 items-stretch bg-[linear-gradient(90deg,#28201c_0%,#3a2a22_30%,#2f3a2b_42%,#33352a_50%,#3a2822_62%,#3a2a24_100%)] text-white">
      <div className="flex w-[49px] items-center justify-center">
        <svg width="16" height="16" viewBox="0 0 16 16"><path d="M0 2.300L6.700 1.300V7.500H0ZM7.500 1.200L16 0V7.500H7.500ZM0 8.400H6.700V14.700L0 13.700ZM7.500 8.400H16V16L7.500 14.800Z" fill="#fff" /></svg>
      </div>
      <div className="flex w-[342px] items-center border border-[#5c5c5c] bg-[#333333] pl-[11px] text-[13.8px] text-[#d0d0d0]">
        <svg width="17" height="17" viewBox="0 0 17 17"><circle cx="10.500" cy="6.500" r="5.500" fill="none" stroke="#ddd" /><path d="M6.500 10.500L1 16" stroke="#ddd" /></svg>
        <span className="ml-[10px] pt-[1px]">Type here to search</span>
      </div>
      <div className="flex w-[50px] items-center justify-center">
        <span className="h-[15px] w-[15px] rounded-full border-[2px] border-white" />
      </div>
      <div className="flex w-[50px] items-center justify-start pl-[11px]">
        <svg width="17" height="16" viewBox="0 0 17 16"><path d="M1 .5H11M1 15.500H11M2.500 4.500H9.500V11.500H2.500ZM14 1V3M14 5.500V7M14 9V15" fill="none" stroke="#fff" /></svg>
      </div>
      <TaskIcon>
        <svg width="20" height="24" viewBox="0 0 20 24">
          <path d="M1 14C1 6 6 1 11 1C16 1 19 5 19 13H7C7 18 13 20 18 17V21C11 25 1 22 1 14ZM7 9.500H13.500C13.500 5.500 8 5 7 9.500Z" fill="#0078d7" />
        </svg>
      </TaskIcon>
      <TaskIcon>
        <svg width="22" height="21" viewBox="0 0 22 21">
          <path d="M0 1H9L11 3H22V20H0Z" fill="#f6cd5a" />
          <path d="M0 1H9L11 4H0Z" fill="#e2a32b" />
          <path d="M4 20V12H9V9.500H13V12H18V20H13V16H9V20Z" fill="#3f9be5" />
        </svg>
      </TaskIcon>
      <TaskIcon underline>
        <svg width="22" height="22" viewBox="0 0 22 22">
          <circle cx="11" cy="11" r="11" fill="#fbc02d" />
          <path d="M11 0A11 11 0 0 0 1.500 5.500L6 13 11 6H21A11 11 0 0 0 11 0Z" fill="#db4437" />
          <path d="M1.500 5.500A11 11 0 0 0 9.500 21.900L13 15 6 13Z" fill="#3aa757" />
          <circle cx="11" cy="11" r="5" fill="#fff" />
          <circle cx="11" cy="11" r="3.800" fill="#5e97f6" />
        </svg>
      </TaskIcon>
      <TaskIcon>
        <svg width="23" height="27" viewBox="0 0 23 27" className="mt-[-4px]">
          <path d="M7 6C7 -1 16 -1 16 6" fill="none" stroke="#fff" />
          <rect x="0" y="5" width="23" height="22" fill="#fff" />
          <rect x="5.500" y="10" width="5.500" height="5.500" fill="#f25022" />
          <rect x="12" y="10" width="5.500" height="5.500" fill="#7fba00" />
          <rect x="5.500" y="16.500" width="5.500" height="5.500" fill="#00a4ef" />
          <rect x="12" y="16.500" width="5.500" height="5.500" fill="#ffb900" />
        </svg>
      </TaskIcon>
      <TaskIcon>
        <div className="relative ml-[3px] h-[26px] w-[30px]">
          <svg width="25" height="22" viewBox="0 0 25 22">
            <path d="M0 8L12.500 0 25 8V22H0Z" fill="#0a64b4" />
            <path d="M0 8H25V22H0Z" fill="#35a8f0" />
            <path d="M0 8L12.500 15 25 8" fill="#e6f2fb" />
          </svg>
          <div className="absolute bottom-[-2px] right-0 flex h-[16px] w-[16px] items-center justify-center rounded-full border border-[#999] bg-[#333] text-[11px] font-semibold">6</div>
        </div>
      </TaskIcon>
      <TaskIcon>
        <svg width="26" height="27" viewBox="0 0 26 27">
          <path d="M6 4C6 1 26 1 26 4V23C26 27 6 27 6 23Z" fill="#a4373a" />
          <path d="M6 4C6 1 26 1 26 4C26 7 6 7 6 4Z" fill="#e38b97" />
          <path d="M6 12C10 14 22 14 26 12V17C22 19 10 19 6 17Z" fill="#841f2a" />
          <rect x="0" y="8" width="13" height="13" fill="#b7313e" />
          <text x="6.500" y="18.500" textAnchor="middle" fontSize="10.500" fontWeight="700" fontFamily="Liberation Sans" fill="#fff">A</text>
        </svg>
      </TaskIcon>
      <TaskIcon>
        <OfficeIcon letter="W" box="#185abd" bands={["#41a5ee", "#2b7cd3", "#185abd"]} />
      </TaskIcon>
      <TaskIcon>
        <svg width="22" height="28" viewBox="0 0 22 28">
          <path d="M0 4L11 0 22 4V19L11 28 0 19Z" fill="#b2292e" />
          <path d="M5 9L11 13 17 9V18L11 22 5 18Z" fill="#33261f" />
        </svg>
      </TaskIcon>
      <TaskIcon>
        <svg width="24" height="28" viewBox="0 0 24 28">
          <ellipse cx="12" cy="14" rx="12" ry="14" fill="#2ca01c" />
          <path d="M10.500 8V24M13.500 4V20M10.500 10H8.500A4 4 0 0 0 8.500 18H10.500M13.500 10H15.500A4 4 0 0 1 15.500 18H13.500" fill="none" stroke="#fff" strokeWidth="2" />
        </svg>
      </TaskIcon>
      <TaskIcon active underline>
        <OfficeIcon letter="X" box="#107c41" bands={["#33c481", "#21a366", "#185c37"]} />
      </TaskIcon>
      <TaskIcon underline>
        <svg width="18" height="28" viewBox="0 0 18 28">
          <rect width="18" height="28" fill="#fff" />
          <rect x="2.500" y="3" width="13" height="4" fill="#333" />
          <path d="M3 11H6M7.500 11H10.500M12 11H15M3 16H6M7.500 16H10.500M12 16H15M3 21H6M7.500 21H10.500M12 21H15" stroke="#333" strokeWidth="2.500" />
        </svg>
      </TaskIcon>
      <div className="ml-auto flex items-center pr-[15px] text-[12px]">
        <svg width="13" height="8" viewBox="0 0 13 8"><path d="M.5 7.500L6.500 1.500 12.500 7.500" fill="none" stroke="#fff" /></svg>
        <svg width="17" height="10" viewBox="0 0 17 10" className="ml-[9px]"><path d="M3 10C0 10 0 6 3 6C3 3 6 3 7 4C9 0 14 2 13 5C17 5 17 10 14 10Z" fill="#e8e8e8" /></svg>
        <svg width="16" height="9" viewBox="0 0 16 9" className="ml-[7px]"><path d="M.5.5H14.500V8.500H.5Z" fill="none" stroke="#fff" /><rect x="2" y="2" width="7" height="5" fill="#fff" /><rect x="15" y="3" width="1" height="3" fill="#fff" /></svg>
        <svg width="14" height="13" viewBox="0 0 14 13" className="ml-[7px]"><path d="M1 12C1 6 6 1 12 1M4 12C4 8 8 4 12 4M7 12C7 10 10 7 12 7" fill="none" stroke="#ccc" strokeDasharray="1.500 .8" /><circle cx="11.500" cy="11.500" r="1.300" fill="#fff" /></svg>
        <svg width="17" height="13" viewBox="0 0 17 13" className="ml-[8px]"><path d="M.5 4.500H3L7 1V12L3 8.500H.5Z" fill="none" stroke="#fff" /><path d="M10 4C11 5.500 11 7.500 10 9M12.500 2.500C14.500 5 14.500 8 12.500 10.500M15 1C17.500 4 17.500 9 15 12" fill="none" stroke="#999" /></svg>
        <div className="ml-[6px] flex w-[62px] flex-col items-center text-[11.2px] leading-[19px]">
          <span>1:26 PM</span>
          <span>4/26/2020</span>
        </div>
        <div className="relative ml-[13px] mt-[8px] h-[24px] w-[26px]">
          <svg width="16" height="13" viewBox="0 0 16 13" className="absolute left-0 top-0"><path d="M0 0H16V11H0Z" fill="#fff" /><path d="M3 3H13M3 6H13M3 9H10" stroke="#888" /></svg>
          <div className="absolute bottom-0 right-0 flex h-[17px] w-[20px] items-center justify-center rounded-full border border-[#999] bg-[#333] text-[11px] font-bold">26</div>
        </div>
      </div>
    </div>
  )
}

export default function App() {
  return (
    <div className="flex h-[768px] w-[1366px] flex-col overflow-hidden font-['Open_Sans',sans-serif]">
      <TitleBar />
      <TabRow />
      <Ribbon />
      <FormulaBar />
      <Sheet />
      <SheetTabs />
      <StatusBar />
      <Taskbar />
    </div>
  )
}
